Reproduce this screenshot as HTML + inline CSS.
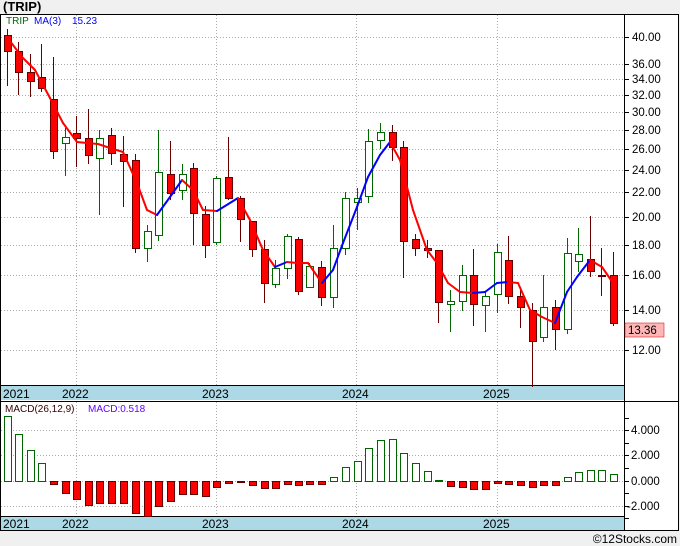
<!DOCTYPE html>
<html><head><meta charset="utf-8"><style>
html,body{margin:0;padding:0;background:#f0f0f0;width:680px;height:546px;overflow:hidden;font-family:"Liberation Sans",sans-serif}
svg{position:absolute;left:0;top:0}
</style></head><body>
<svg id="s" width="680" height="546" xmlns="http://www.w3.org/2000/svg" font-family="Liberation Sans, sans-serif">
<rect x="0" y="0" width="680" height="546" fill="#f0f0f0"/>
<text x="3" y="11" font-size="13" font-weight="bold" fill="#000">(TRIP)</text>
<rect x="0.5" y="14.5" width="678" height="516" fill="#fff" stroke="#000"/>
<g id="grid" stroke="#aaa" stroke-dasharray="1,2" stroke-width="1"></g>
<rect x="1" y="385" width="623" height="15" fill="#add8e6"/>
<rect x="1" y="516" width="623" height="14" fill="#add8e6"/>
<line x1="0" y1="385.5" x2="624" y2="385.5" stroke="#000"/>
<line x1="0" y1="401.5" x2="679" y2="401.5" stroke="#000"/>
<line x1="0" y1="516.5" x2="624" y2="516.5" stroke="#000"/>
<line x1="624.5" y1="14" x2="624.5" y2="531" stroke="#000"/>
<g font-size="12" fill="#000">
<text x="3" y="398">2021</text><text x="62" y="398">2022</text><text x="202" y="398">2023</text><text x="342" y="398">2024</text><text x="483" y="398">2025</text>
<text x="3" y="528">2021</text><text x="62" y="528">2022</text><text x="202" y="528">2023</text><text x="342" y="528">2024</text><text x="483" y="528">2025</text>
</g>
<g id="c"></g>
<g id="ticks" stroke="#000"></g>
<g font-size="11.5" fill="#000">
<text x="632" y="41">40.00</text><text x="632" y="68">36.00</text><text x="632" y="83">34.00</text><text x="632" y="99">32.00</text><text x="632" y="116">30.00</text><text x="632" y="134">28.00</text><text x="632" y="153">26.00</text><text x="632" y="174">24.00</text><text x="632" y="196">22.00</text><text x="632" y="221">20.00</text><text x="632" y="249">18.00</text><text x="632" y="279">16.00</text><text x="632" y="314">14.00</text><text x="632" y="354">12.00</text>
<text x="631" y="434">4.000</text><text x="631" y="459">2.000</text><text x="631" y="485">0.000</text><text x="627" y="510">-2.000</text>
</g>
<rect x="625" y="323" width="39" height="14" fill="#ffb6b6" stroke="#c00" stroke-width="0.5"/>
<text x="628" y="334" font-size="11.5" fill="#000">13.36</text>
<text x="6" y="24" font-size="10" fill="#060">TRIP</text>
<text x="34" y="24" font-size="10" fill="#00f">MA(3)</text>
<text x="72" y="24" font-size="10" fill="#00f">15.23</text>
<text x="5" y="412" font-size="10" fill="#300">MACD(26,12,9)</text>
<text x="88" y="412" font-size="10" fill="#60f">MACD:0.518</text>
<text x="677" y="543" font-size="12" fill="#000" text-anchor="end">©12Stocks.com</text>
</svg>
<script>
var NS="http://www.w3.org/2000/svg";
function el(p,t,a){var e=document.createElementNS(NS,t);for(var k in a)e.setAttribute(k,a[k]);p.appendChild(e);return e;}
var g=document.getElementById('grid'),c=document.getElementById('c'),tk=document.getElementById('ticks');
[37,64,79,95,112,130,149,170,192,217,245,275,310,350].forEach(function(y){el(g,'line',{x1:1,y1:y+.5,x2:624,y2:y+.5});el(tk,'line',{x1:624,y1:y+.5,x2:629,y2:y+.5});});
[430,455,481,506].forEach(function(y){el(g,'line',{x1:1,y1:y+.5,x2:624,y2:y+.5});});
[418,430,443,455,468,481,493,506,518].forEach(function(y){el(tk,'line',{x1:624,y1:y+.5,x2:629,y2:y+.5});});
[76,216,356,497].forEach(function(x){el(g,'line',{x1:x+.5,y1:15,x2:x+.5,y2:385});el(g,'line',{x1:x+.5,y1:402,x2:x+.5,y2:516});});
var C=[[7,35,51,29,86,0],[18,51,72,42,95,0],[30,72,81,54,97,0],[41,77,88,44,92,0],[53,99,151,57,159,0],[65,137,143,128,176,1],[76,133,138,116,167,0],[88,138,155,109,164,0],[99,138,158,130,215,1],[111,135,153,128,165,0],[123,154,161,136,207,0],[135,160,248,154,253,0],[147,231,248,225,262,1],[158,172,235,130,241,1],[170,174,193,141,200,0],[182,174,190,164,200,1],[193,168,213,163,245,0],[205,214,245,206,258,0],[216,178,242,176,245,1],[228,177,198,137,200,0],[240,198,219,196,242,0],[252,221,249,221,257,0],[264,249,283,240,303,0],[275,268,284,260,288,1],[287,236,268,234,279,1],[298,239,291,237,295,0],[309,266,287,263,288,1],[321,267,297,261,306,0],[333,248,297,225,308,1],[345,198,248,192,255,1],[357,198,202,188,230,1],[368,141,196,129,203,1],[380,132,140,123,149,1],[392,132,147,125,161,0],[403,147,241,141,278,0],[415,239,248,234,256,0],[427,248,250,240,258,0],[438,250,302,250,323,0],[450,301,304,290,332,1],[462,275,301,265,311,1],[473,275,304,249,326,0],[485,296,305,292,332,1],[497,252,294,244,313,1],[508,260,296,236,304,0],[520,296,307,287,328,0],[532,310,341,303,387,0],[543,307,337,275,342,1],[555,307,329,300,350,0],[567,253,329,238,334,1],[578,254,261,228,272,1],[590,259,271,216,277,0],[601,275,276,248,296,0],[613,275,323,252,326,0]];
C.forEach(function(d){var x=d[0],up=d[5];
el(c,'line',{x1:x+.5,y1:d[3],x2:x+.5,y2:d[4],stroke:up?'#060':'#600'});
el(c,'rect',{x:x-3+.5,y:d[1]+.5,width:7,height:Math.max(1,d[2]-d[1]),fill:up?'#fff':'#f00',stroke:up?'#060':'#600'});});
var M=[[7,37],[22,57],[35,70],[50,98],[63,123],[77,142],[87,143],[98,144],[110,148],[123,152],[137,183],[147,210],[157,215],[170,197],[182,180],[193,190],[203,210],[217,211],[238,198],[250,220],[263,250],[275,267],[287,262],[297,263],[308,263],[322,283],[333,270],[343,243],[357,207],[368,177],[380,155],[390,142],[400,160],[413,210],[427,250],[437,263],[448,283],[460,292],[473,293],[485,292],[497,283],[508,282],[518,283],[530,310],[542,317],[555,323],[567,292],[577,277],[590,260],[602,267],[613,283]];
for(var i=1;i<M.length;i++){el(c,'line',{x1:M[i-1][0],y1:M[i-1][1],x2:M[i][0],y2:M[i][1],stroke:M[i][1]<M[i-1][1]?'#00f':'#f00','stroke-width':2,'stroke-linecap':'round'});}
var B=[416,434,450,463,484,493,499,505,503,503,503,513,516,506,501,494,494,496,487,483,482,485,488,488,484,485,484,484,477,467,461,448,440,439,453,463,471,480,486,487,489,489,483,484,485,487,485,485,477,472,470,470,474];
B.forEach(function(v,i){var x=C[i][0],z=481;var up=v<z;var y=up?v:z,h=Math.max(1,Math.abs(v-z));
el(c,'rect',{x:x-3+.5,y:y+.5,width:7,height:h,fill:up?'#fff':'#f00',stroke:up?'#060':'#600'});});
</script>
</body></html>
